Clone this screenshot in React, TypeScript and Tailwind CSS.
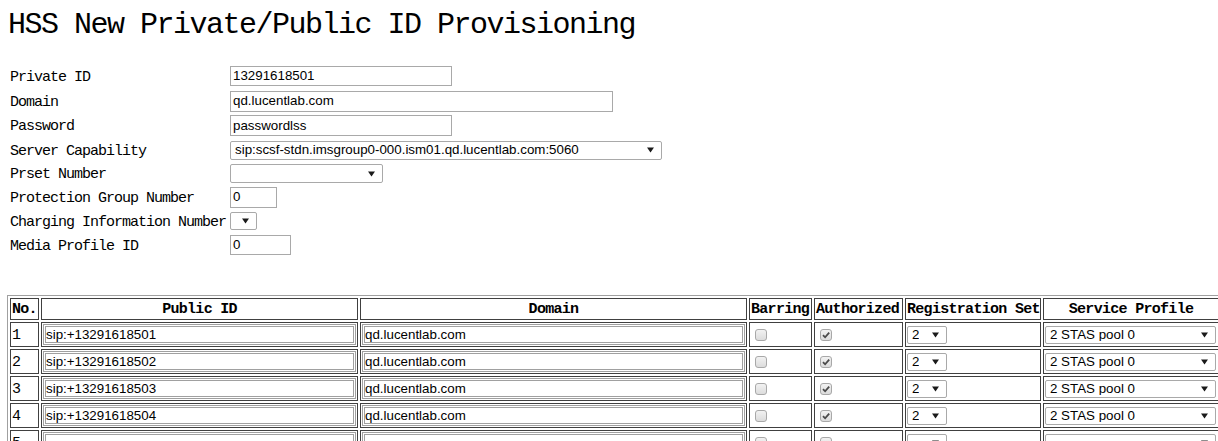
import React from "react";

const mono = "font-['Liberation_Mono',monospace]";
const sans = "font-['Liberation_Sans',Arial,sans-serif]";

type Field =
  | { kind: "input"; w: number; h: number; value: string }
  | { kind: "select"; w: number; h: number; value: string };

const fields: { label: string; rowH: number; field: Field }[] = [
  { label: "Private ID", rowH: 26, field: { kind: "input", w: 222, h: 20, value: "13291618501" } },
  { label: "Domain", rowH: 24, field: { kind: "input", w: 383, h: 21, value: "qd.lucentlab.com" } },
  { label: "Password", rowH: 25, field: { kind: "input", w: 222, h: 21, value: "passwordlss" } },
  {
    label: "Server Capability",
    rowH: 24,
    field: { kind: "select", w: 432, h: 19, value: "sip:scsf-stdn.imsgroup0-000.ism01.qd.lucentlab.com:5060" },
  },
  { label: "Prset Number", rowH: 23, field: { kind: "select", w: 153, h: 19, value: "" } },
  { label: "Protection Group Number", rowH: 24, field: { kind: "input", w: 47, h: 21, value: "0" } },
  { label: "Charging Information Number", rowH: 24, field: { kind: "select", w: 27, h: 18, value: "" } },
  { label: "Media Profile ID", rowH: 24, field: { kind: "input", w: 61, h: 20, value: "0" } },
];

const rows = [
  { no: "1", id: "sip:+13291618501", domain: "qd.lucentlab.com", auth: true, reg: "2", profile: "2 STAS pool 0" },
  { no: "2", id: "sip:+13291618502", domain: "qd.lucentlab.com", auth: true, reg: "2", profile: "2 STAS pool 0" },
  { no: "3", id: "sip:+13291618503", domain: "qd.lucentlab.com", auth: true, reg: "2", profile: "2 STAS pool 0" },
  { no: "4", id: "sip:+13291618504", domain: "qd.lucentlab.com", auth: true, reg: "2", profile: "2 STAS pool 0" },
  { no: "5", id: "", domain: "", auth: false, reg: "", profile: "" },
  { no: "6", id: "", domain: "", auth: false, reg: "", profile: "" },
];

const Arrow = () => (
  <svg width="7" height="6" viewBox="0 0 7 6" className="shrink-0">
    <path d="M0 0.5 L7 0.5 L3.5 5.5 Z" fill="#1a1a1a" />
  </svg>
);

function Select({ w, h, value }: { w: number; h: number; value: string }) {
  return (
    <div
      className={`flex items-center justify-between bg-white border border-[#a9a9a9] rounded-[2px] pl-[4px] pr-[7px] text-[13.33px] text-black ${sans}`}
      style={{ width: w, height: h }}
    >
      <span className="truncate leading-none">{value}</span>
      <Arrow />
    </div>
  );
}

function Checkbox({ checked }: { checked: boolean }) {
  return (
    <span className="ml-[4px] flex items-center justify-center w-[12px] h-[12px] rounded-[3px] border border-[#a8a8a8] bg-linear-to-b from-[#f2f2f2] to-[#dcdcdc]">
      {checked && (
        <svg width="10" height="10" viewBox="0 0 10 10">
          <path d="M2 5.2 L4.1 7.3 L8.2 2.6" fill="none" stroke="#4a4a4a" strokeWidth="1.8" />
        </svg>
      )}
    </span>
  );
}

const headers = [
  { t: "No.", w: "w-[29px]", left: true },
  { t: "Public ID", w: "w-[317px]" },
  { t: "Domain", w: "w-[387px]" },
  { t: "Barring", w: "w-[63px]", left: true },
  { t: "Authorized", w: "w-[89px]", left: true },
  { t: "Registration Set", w: "w-[136px]", left: true },
  { t: "Service Profile", w: "w-[176px]" },
];

const cell = "border border-[#404040] p-[1px] align-middle";
const tableInput = `h-[21px] w-full border-[3px] border-double border-[#a0a0a0] pl-0 text-[13.33px] text-black bg-white flex items-center ${sans}`;

export default function App() {
  return (
    <div className="w-[1218px] h-[441px] overflow-hidden bg-white text-black">
      <h1 className={`pl-[8px] pt-[7px] text-[30px] leading-[36px] font-normal tracking-[-1.5px] ${mono}`}>
        HSS New Private/Public ID Provisioning
      </h1>

      <div className="mt-[20px] pl-[10px] flex flex-col">
        {fields.map((f) => (
          <div key={f.label} className="flex items-center" style={{ height: f.rowH }}>
            <div className={`w-[220px] pt-[4px] text-[15px] tracking-[-1px] whitespace-nowrap ${mono}`}>{f.label}</div>
            {f.field.kind === "input" ? (
              <div
                className={`flex items-center border border-[#a9a9a9] pl-[2px] text-[13.33px] text-black ${sans}`}
                style={{ width: f.field.w, height: f.field.h }}
              >
                {f.field.value}
              </div>
            ) : (
              <Select w={f.field.w} h={f.field.h} value={f.field.value} />
            )}
          </div>
        ))}
      </div>

      <div className="pl-[7px] mt-[38px]">
        <table className="table-fixed w-[1215px] border-separate border-spacing-[2px] border border-[#a0a0a0]">
          <thead>
            <tr>
              {headers.map((h) => (
                <th key={h.t} className={`${h.w} border border-[#404040] p-0`}>
                  <div
                    className={`h-[20px] pt-[3px] flex items-center ${h.left ? "justify-start pl-[1px]" : "justify-center"} text-[15px] font-bold tracking-[-0.7px] whitespace-nowrap ${mono}`}
                  >
                    {h.t}
                  </div>
                </th>
              ))}
            </tr>
          </thead>
          <tbody>
            {rows.map((r) => (
              <tr key={r.no}>
                <td className={cell}>
                  <div className={`h-[21px] pt-[4px] flex items-center text-[15px] tracking-[-1px] ${mono}`}>{r.no}</div>
                </td>
                <td className={cell}>
                  <div className={tableInput}>{r.id}</div>
                </td>
                <td className={cell}>
                  <div className={tableInput}>{r.domain}</div>
                </td>
                <td className={cell}>
                  <div className="h-[21px] flex items-center">
                    <Checkbox checked={false} />
                  </div>
                </td>
                <td className={cell}>
                  <div className="h-[21px] flex items-center">
                    <Checkbox checked={r.auth} />
                  </div>
                </td>
                <td className={cell}>
                  <div className="h-[21px] flex items-center">
                    <Select w={40} h={18} value={r.reg} />
                  </div>
                </td>
                <td className={cell}>
                  <div className="h-[21px] flex items-center pr-[1px]">
                    <Select w={171} h={18} value={r.profile} />
                  </div>
                </td>
              </tr>
            ))}
          </tbody>
        </table>
      </div>
    </div>
  );
}
